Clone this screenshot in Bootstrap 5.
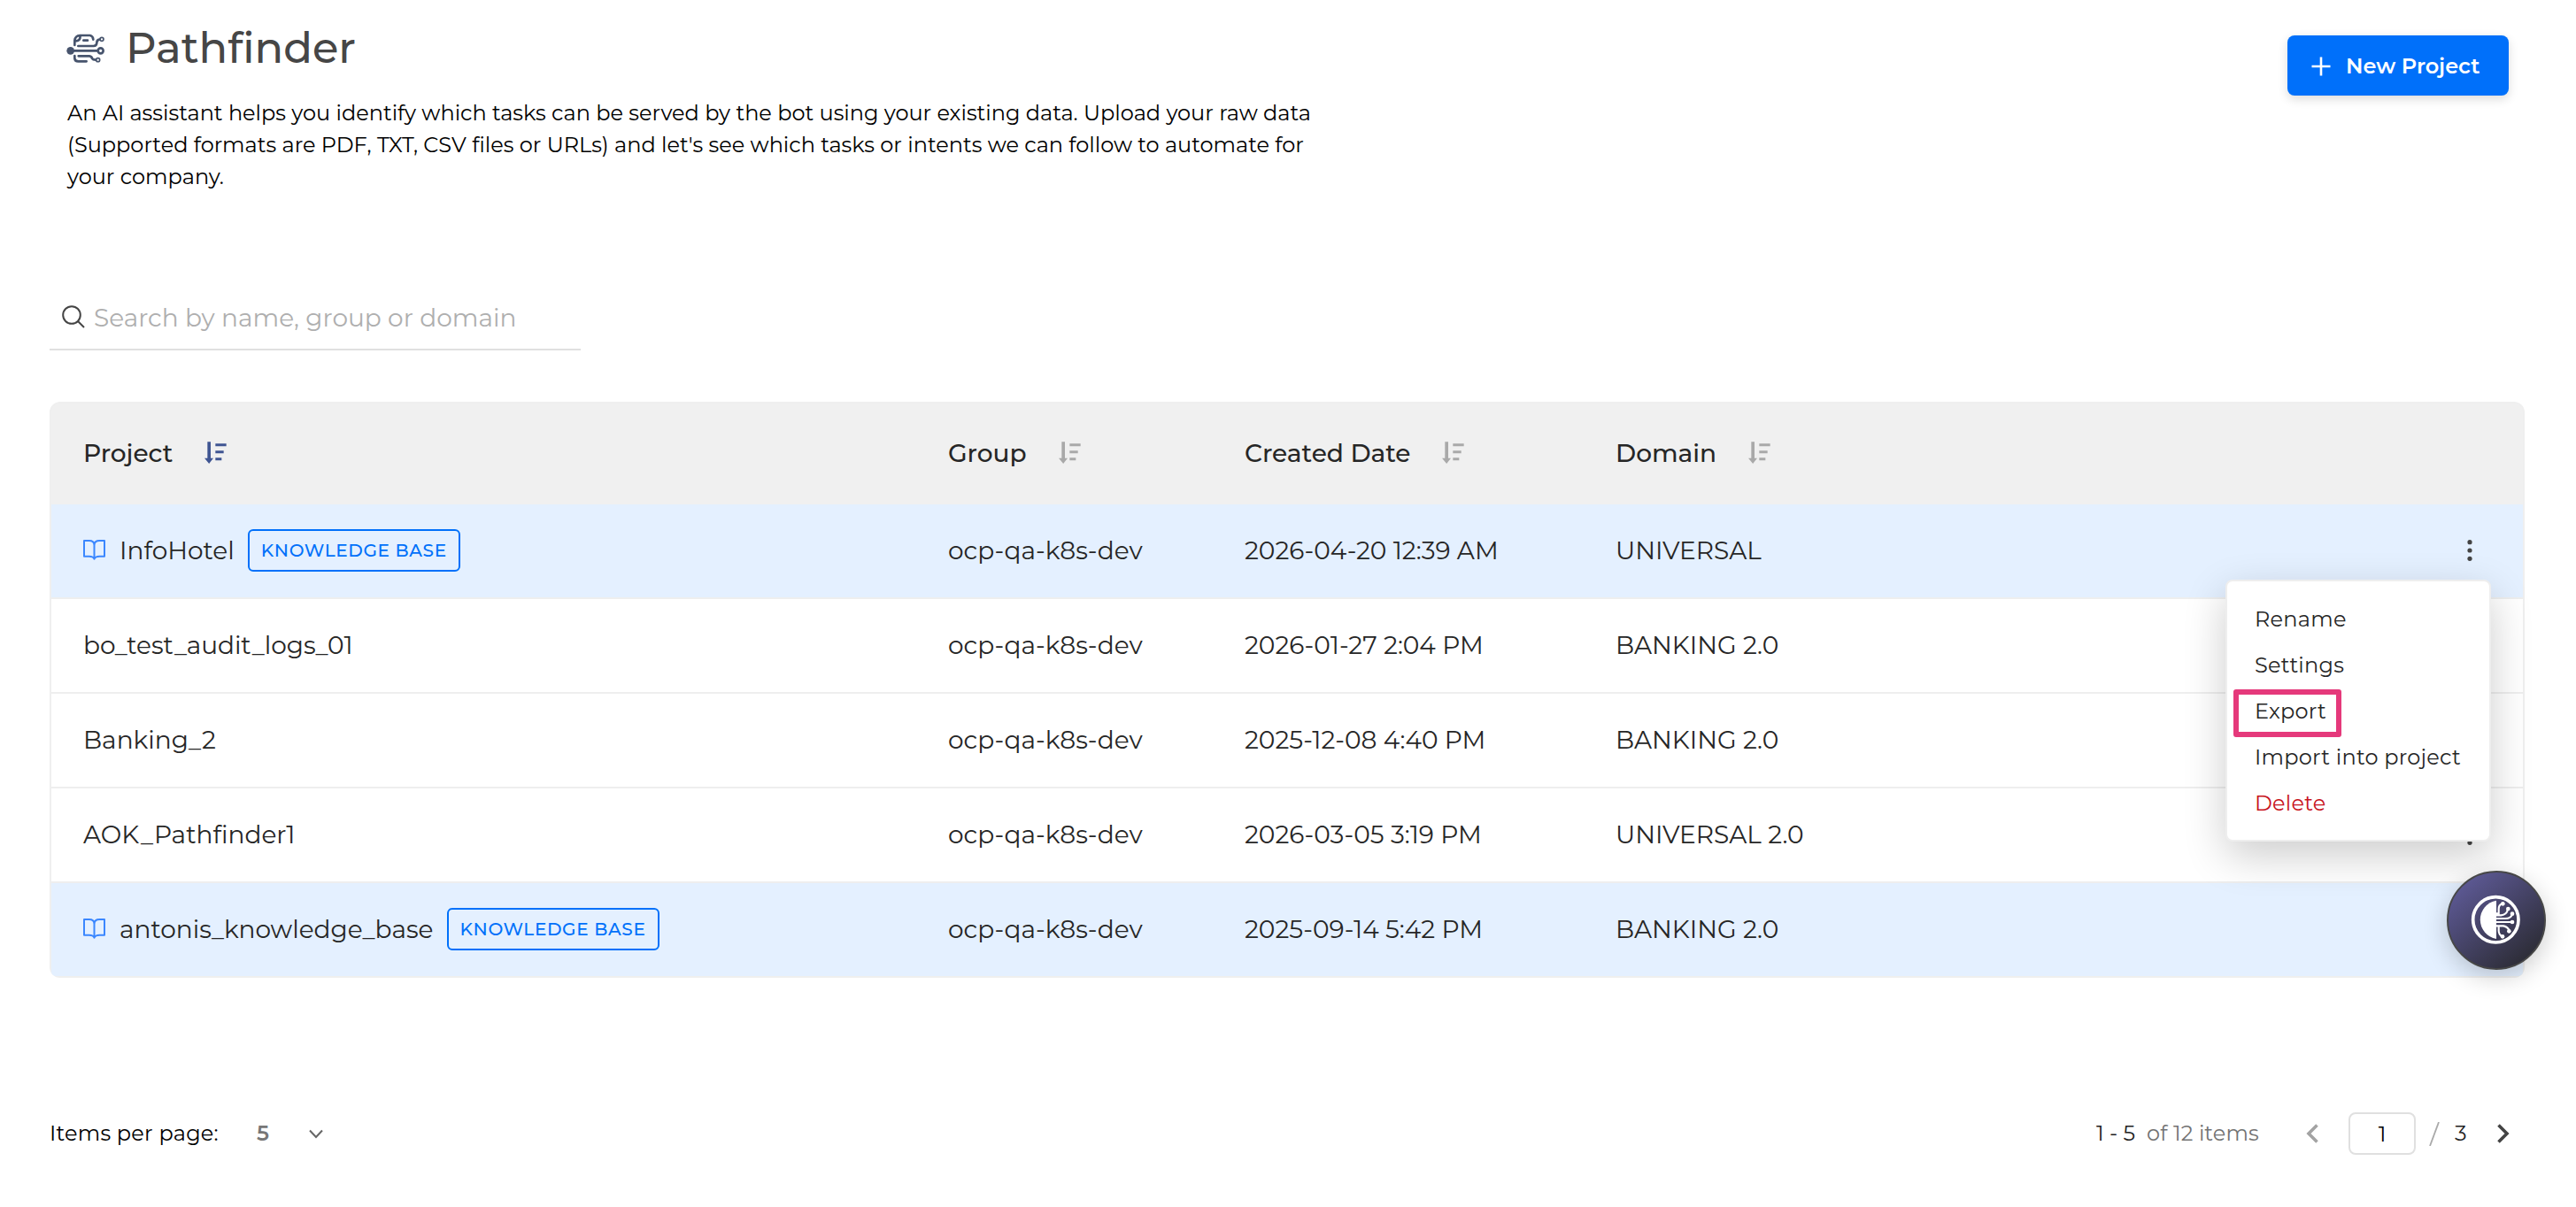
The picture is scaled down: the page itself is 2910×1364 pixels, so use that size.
<!DOCTYPE html>
<html lang="en">
<head>
<meta charset="utf-8">
<meta name="viewport" content="width=device-width, initial-scale=1">
<title>Pathfinder</title>
<link href="https://cdn.jsdelivr.net/npm/bootstrap@5.3.0/dist/css/bootstrap.min.css" rel="stylesheet">
<style>
  body { font-family: Montserrat, Inter, "Open Sans", sans-serif; font-size: 28px; color: #262626; background: #fff; min-height: 1364px; }
  .page { padding: 0 58px 0 56px; }
  .page-head { padding: 24px 18px 0 19px; height: 218px; }
  .page-title { font-size: 48px; font-weight: 500; line-height: 60px; color: #464646; margin: 0 0 26px 22px; }
  .page-intro { font-size: 24px; line-height: 36px; color: #000; margin-left: 1px; }
  .logo-bot { width: 45px; height: 34px; margin-top: 14px; }
  .btn-new { width: 250px; height: 68px; margin-top: 16px; padding: 1px 0 0 27px; background: #0070fa; border: 0; border-radius: 8px; color: #fff; font-size: 24px; font-weight: 600; box-shadow: 0 4px 12px rgba(0,0,0,.14); gap: 17px; }
  .btn-new:hover { background: #0070fa; color: #fff; }
  .finder { width: 600px; height: 74px; margin-top: 104px; border-bottom: 2px solid #e0e0e0; padding-left: 14px; }
  .finder input { border: 0; background: none; outline: 0; width: 540px; margin-left: 10px; padding: 2px 0 0; font-size: 28px; }
  .finder input::placeholder { color: #afafaf; opacity: 1; }
  .grid-box { margin-top: 58px; border: 2px solid #efefef; border-radius: 12px; background: #f0f0f0; }
  .grid-tbl { table-layout: fixed; border-collapse: separate; border-spacing: 0; font-size: 28px; line-height: 36px; --bs-table-bg: transparent; }
  .grid-tbl > :not(caption) > * > * { padding: 0 0 0 36px; vertical-align: middle; color: #262626; border-bottom: 2px solid #eee; white-space: nowrap; }
  .grid-tbl > thead > tr > th { height: 114px; font-weight: 500; background: #f0f0f0; border: 0; padding-bottom: 3px; }
  .grid-tbl > thead > tr > th:first-child { border-top-left-radius: 10px; }
  .grid-tbl > thead > tr > th:last-child { border-top-right-radius: 10px; }
  .grid-tbl > tbody > tr > td { height: 107px; background: #fff; padding-bottom: 2px; }
  .grid-tbl > tbody > tr.kb > td { background: #e4f0ff; }
  .grid-tbl > tbody > tr:last-child > td { height: 105px; border-bottom: 0; }
  .grid-tbl > tbody > tr:last-child > td:first-child { border-bottom-left-radius: 5px; }
  .grid-tbl > tbody > tr:last-child > td:last-child { border-bottom-right-radius: 5px; }
  .c-name { width: 977px; } .c-group { width: 335px; } .c-date { width: 419px; } .c-dom { width: 560px; }
  .lbl-p { width: 137px; }
  .lbl-g { width: 125px; }
  .lbl-c { width: 223px; }
  .lbl-d { width: 150px; }
  .sort { width: 25px; height: 25px; fill: #a9a9a9; }
  .sort.on { fill: #3f5592; }
  .book { width: 25px; height: 23px; margin-right: 16px; }
  .kb-tag { width: 240px; height: 48px; border: 2px solid #0070fa; border-radius: 6px; color: #0070fa; font-size: 20px; font-weight: 500; letter-spacing: .65px; margin-left: 15px; }
  .kebab { width: 8px; height: 26px; fill: #444; margin-right: 56px; }
  .row-menu.dropdown-menu { top: 199px; right: 36px; width: 300px; height: 296px; padding: 16px 0; border: 2px solid #eee; border-radius: 8px; background: #fff; box-shadow: 0 16px 48px rgba(0,0,0,.2); z-index: 5; }
  .row-menu .dropdown-item { height: 52px; padding: 0 0 0 31px; line-height: 53px; font-size: 24px; letter-spacing: .24px; color: #262626; position: relative; }
  .row-menu .dropdown-item.del { color: #c8141d; }
  .hl { left: 7px; top: 2px; width: 122px; height: 54px; border: 6px solid #e5397b; border-radius: 3px; }
  .chat-fab { width: 112px; height: 112px; right: 34px; top: 984px; border-radius: 50%; border: 2px solid #474747; background: linear-gradient(140deg, #5f5b99 8%, #2b2b33 90%); box-shadow: 0 8px 28px rgba(0,0,0,.2); z-index: 10; }
  .pager { margin-top: 152px; height: 48px; font-size: 24px; color: #000; padding-right: 17px; }
  .pager .per { width: 234px; letter-spacing: .22px; }
  .pager .five { width: 59px; color: #777; font-weight: 600; }
  .pager .rng { width: 56px; color: #222; margin-right: 1px; }
  .pager .tot { width: 180px; color: #737373; letter-spacing: .15px; }
  .pager input { width: 76px; height: 48px; border: 2px solid #e0e0e0; border-radius: 8px; text-align: center; margin: 0 15px 0 34px; padding: 0; font-size: 24px; color: #000; }
  .pager .pages { width: 48px; margin-left: 17px; color: #222; }
</style>
</head>
<body>
<svg class="d-none">
  <symbol id="sort" viewBox="0 0 75 75"><path d="M10 1H21V56H30L15.500 75L0 56H10ZM37 7H74V16H37ZM37 31H65V40H37ZM37 55H58V64H37Z"/></symbol>
  <symbol id="book" viewBox="0 0 75 69"><path d="M3 3H20Q37 3 37.500 18V65Q34 56 20 56H3ZM72 3H55Q38 3 37.500 18V65Q41 56 55 56H72Z" fill="none" stroke="#3b87ff" stroke-width="6" stroke-linejoin="round"/></symbol>
  <symbol id="dots" viewBox="0 0 8 26"><circle cx="4" cy="3.700" r="2.600"/><circle cx="4" cy="13" r="2.600"/><circle cx="4" cy="22.300" r="2.600"/></symbol>
</svg>
<main class="page">
  <header class="page-head d-flex justify-content-between align-items-start">
    <div>
      <div class="d-flex align-items-start">
        <svg class="logo-bot" viewBox="46 55 135 102" fill="none" stroke="#47546d" stroke-width="8" stroke-linecap="round">
          <path d="M74 94V78Q76 62 92 61H126Q136 63 137 75M77 80Q93 80 93 64M104 78H118"/>
          <path d="M86 97H138Q149 97 149 86Q149 76 158 75"/><circle cx="166" cy="74" r="6" stroke-width="5"/>
          <path d="M60 113H152"/><circle cx="162" cy="113" r="9"/><circle cx="60" cy="113" r="13" fill="#47546d" stroke="none"/>
          <path d="M87 131H124Q132 132 133 139Q136 144 145 144"/><circle cx="153" cy="144" r="6" stroke-width="5"/>
          <path d="M74 130V139Q75 149 86 149H114"/>
        </svg>
        <h1 class="page-title">Pathfinder</h1>
      </div>
      <p class="page-intro mb-0">An AI assistant helps you identify which tasks can be served by the bot using your existing data. Upload your raw data<br>(Supported formats are PDF, TXT, CSV files or URLs) and let's see which tasks or intents we can follow to automate for<br>your company.</p>
    </div>
    <button class="btn btn-new d-flex align-items-center" type="button">
      <svg width="22" height="22" viewBox="0 0 22 22"><path d="M11 .5V21.500M.5 11H21.500" stroke="#fff" stroke-width="2.600"/></svg>
      <span>New Project</span>
    </button>
  </header>

  <div class="finder d-flex align-items-center">
    <svg width="26" height="26" viewBox="0 0 26 26" fill="none" stroke="#444" stroke-width="2"><circle cx="11" cy="11" r="9.800"/><path d="M18 18L25 25"/></svg>
    <input type="text" placeholder="Search by name, group or domain">
  </div>

  <div class="grid-box position-relative">
    <table class="table grid-tbl mb-0">
      <colgroup><col class="c-name"><col class="c-group"><col class="c-date"><col class="c-dom"><col></colgroup>
      <thead>
        <tr>
          <th><div class="d-flex align-items-center"><span class="lbl-p">Project</span><svg class="sort on"><use href="#sort"/></svg></div></th>
          <th><div class="d-flex align-items-center"><span class="lbl-g">Group</span><svg class="sort"><use href="#sort"/></svg></div></th>
          <th><div class="d-flex align-items-center"><span class="lbl-c">Created Date</span><svg class="sort"><use href="#sort"/></svg></div></th>
          <th><div class="d-flex align-items-center"><span class="lbl-d">Domain</span><svg class="sort"><use href="#sort"/></svg></div></th>
          <th></th>
        </tr>
      </thead>
      <tbody>
        <tr class="kb">
          <td><div class="d-flex align-items-center"><svg class="book"><use href="#book"/></svg><span>InfoHotel</span><span class="kb-tag d-flex align-items-center justify-content-center">KNOWLEDGE BASE</span></div></td>
          <td>ocp-qa-k8s-dev</td><td>2026-04-20 12:39 AM</td><td>UNIVERSAL</td>
          <td><div class="d-flex justify-content-end"><svg class="kebab"><use href="#dots"/></svg></div></td>
        </tr>
        <tr>
          <td>bo_test_audit_logs_01</td>
          <td>ocp-qa-k8s-dev</td><td>2026-01-27 2:04 PM</td><td>BANKING 2.0</td>
          <td><div class="d-flex justify-content-end"><svg class="kebab"><use href="#dots"/></svg></div></td>
        </tr>
        <tr>
          <td>Banking_2</td>
          <td>ocp-qa-k8s-dev</td><td>2025-12-08 4:40 PM</td><td>BANKING 2.0</td>
          <td><div class="d-flex justify-content-end"><svg class="kebab"><use href="#dots"/></svg></div></td>
        </tr>
        <tr>
          <td>AOK_Pathfinder1</td>
          <td>ocp-qa-k8s-dev</td><td>2026-03-05 3:19 PM</td><td>UNIVERSAL 2.0</td>
          <td><div class="d-flex justify-content-end"><svg class="kebab"><use href="#dots"/></svg></div></td>
        </tr>
        <tr class="kb">
          <td><div class="d-flex align-items-center"><svg class="book"><use href="#book"/></svg><span>antonis_knowledge_base</span><span class="kb-tag d-flex align-items-center justify-content-center">KNOWLEDGE BASE</span></div></td>
          <td>ocp-qa-k8s-dev</td><td>2025-09-14 5:42 PM</td><td>BANKING 2.0</td>
          <td><div class="d-flex justify-content-end"><svg class="kebab"><use href="#dots"/></svg></div></td>
        </tr>
      </tbody>
    </table>
    <ul class="dropdown-menu row-menu show">
      <li><a class="dropdown-item">Rename</a></li>
      <li><a class="dropdown-item">Settings</a></li>
      <li><a class="dropdown-item">Export<span class="hl position-absolute"></span></a></li>
      <li><a class="dropdown-item">Import into project</a></li>
      <li><a class="dropdown-item del">Delete</a></li>
    </ul>
  </div>

  <footer class="pager d-flex align-items-center justify-content-between">
    <div class="d-flex align-items-center">
      <span class="per">Items per page:</span><span class="five">5</span>
      <svg width="16" height="11" viewBox="0 0 16 11"><path d="M1 1.500L8 9L15 1.500" fill="none" stroke="#666" stroke-width="2"/></svg>
    </div>
    <div class="d-flex align-items-center">
      <span class="rng">1 - 5</span><span class="tot">of 12 items</span>
      <svg width="14" height="22" viewBox="0 0 14 22"><path d="M12.500 1.500L3 11L12.500 20.500" fill="none" stroke="#a3a3a3" stroke-width="3.600"/></svg>
      <input type="text" value="1">
      <svg width="12" height="27" viewBox="0 0 12 27"><path d="M11 0L1 27" stroke="#a9a9a9" stroke-width="1.800"/></svg>
      <span class="pages">3</span>
      <svg width="14" height="22" viewBox="0 0 14 22"><path d="M1.500 1.500L11 11L1.500 20.500" fill="none" stroke="#444" stroke-width="3.600"/></svg>
    </div>
  </footer>
</main>
<button class="chat-fab position-absolute p-0" type="button" aria-label="Assistant">
  <svg width="108" height="108" class="d-block" viewBox="78 48 324 324" fill="none" stroke="#fff" stroke-width="6.500">
    <circle cx="238" cy="208" r="77" stroke-width="11"/>
    <path d="M240 143A66 66 0 0 0 240 273Z" fill="#fff" stroke="none"/>
    <path d="M240 187H248V172Q248 158 260 154M240 193H256Q276 190 279 172M240 204H270Q290 204 294 188M240 216H292M240 229H264Q280 232 284 246M248 230V246Q249 260 260 264"/>
    <g fill="#fff" stroke="none"><circle cx="262" cy="154" r="7"/><circle cx="280" cy="171" r="7"/><circle cx="294" cy="188" r="7"/><circle cx="294" cy="216" r="7"/><circle cx="283" cy="247" r="7"/><circle cx="261" cy="265" r="7"/></g>
  </svg>
</button>
<script src="https://cdn.jsdelivr.net/npm/bootstrap@5.3.0/dist/js/bootstrap.bundle.min.js"></script>
</body>
</html>
